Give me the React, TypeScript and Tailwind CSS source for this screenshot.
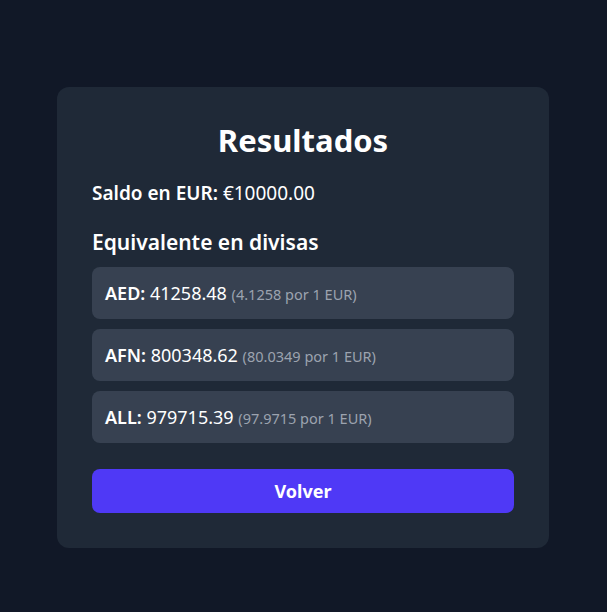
import React from 'react';

interface Rate {
    code: string;
    amount: string;
    rate: string;
}

const rates: Rate[] = [
    { code: 'AED', amount: '41258.48', rate: '4.1258' },
    { code: 'AFN', amount: '800348.62', rate: '80.0349' },
    { code: 'ALL', amount: '979715.39', rate: '97.9715' },
];

const App: React.FC = () => {
    return (
        <div className="min-h-screen bg-[#111827] pt-[87px] pr-px font-['Noto_Sans',sans-serif] text-white">
            <div className="mx-auto w-[492px] rounded-xl bg-[#1f2937] p-[35px]">
                <h1 className="text-center text-[31px] leading-9 font-bold">Resultados</h1>

                <p className="mt-[21px] text-[19px] leading-7">
                    <span className="font-semibold">Saldo en EUR:</span> €10000.00
                </p>

                <h2 className="mt-[21px] text-[21px] leading-7 font-semibold">Equivalente en divisas</h2>

                <ul className="mt-[11px] flex flex-col gap-2.5">
                    {rates.map((r) => (
                        <li key={r.code} className="rounded-lg bg-[#374151] py-3 pr-3 pl-[13px] text-lg">
                            <span className="font-semibold">{r.code}:</span> {r.amount}{' '}
                            <span className="text-[14.5px] text-[#9ca3af]">({r.rate} por 1 EUR)</span>
                        </li>
                    ))}
                </ul>

                <button
                    type="button"
                    className="mt-[26px] h-11 w-full rounded-lg bg-[#4f39f6] text-lg font-bold text-white"
                >
                    Volver
                </button>
            </div>
        </div>
    );
};

export default App;
